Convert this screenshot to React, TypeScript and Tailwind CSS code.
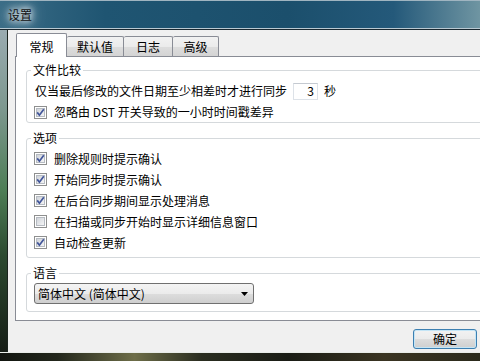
import React from 'react';

const TABS = ['常规', '默认值', '日志', '高级'];

const OPTIONS = [
  { label: '删除规则时提示确认', checked: true },
  { label: '开始同步时提示确认', checked: true },
  { label: '在后台同步期间显示处理消息', checked: true },
  { label: '在扫描或同步开始时显示详细信息窗口', checked: false },
  { label: '自动检查更新', checked: true },
];

function CheckBox({ checked }: { checked: boolean }) {
  return (
    <svg width="13" height="13" viewBox="0 0 13 13" className="shrink-0">
      <defs>
        <linearGradient id="cbfill" x1="0" y1="0" x2="1" y2="1">
          <stop offset="0" stopColor="#cdd1d7" />
          <stop offset="1" stopColor="#f7f7f8" />
        </linearGradient>
      </defs>
      <rect x="0.5" y="0.5" width="12" height="12" fill="#fff" stroke="#8e8f8f" />
      <rect x="2.5" y="2.5" width="8" height="8" fill="url(#cbfill)" stroke="#b6bbc2" />
      {checked && (
        <path d="M3.2 6.4 L5.4 9.2 L9.8 3.2" fill="none" stroke="#42569a" strokeWidth="1.7" />
      )}
    </svg>
  );
}

function Group({ title, children, bodyClass }: { title: string; children: React.ReactNode; bodyClass: string }) {
  return (
    <fieldset className="border border-[#d5d9dc] rounded-[3px] p-0 m-0">
      <legend className="ml-[4px] px-[2px] text-[12px] leading-[14px]">{title}</legend>
      <div className={bodyClass}>{children}</div>
    </fieldset>
  );
}

export default function App() {
  return (
    <div className="w-[480px] h-[361px] overflow-hidden flex flex-col bg-black text-black font-['Noto_Sans_CJK_SC','Microsoft_YaHei',sans-serif]">
      {/* title bar */}
      <div className="h-[30px] flex flex-col shrink-0">
        <div className="h-px bg-[#9fb4c0]" />
        <div className="flex-1 flex items-center pl-[8px] bg-[linear-gradient(90deg,#3a6c86_0%,#1f5572_22%,#1b4f6c_60%,#24597a_82%,#6f95a2_100%)]">
          <span className="text-[12px] leading-[14px] text-[#111] [text-shadow:0_0_6px_#fff,0_0_10px_#fff,0_0_16px_rgba(255,255,255,0.8)]">
            设置
          </span>
        </div>
        <div className="h-px bg-[#b9c9d2]" />
        <div className="h-px bg-[#1a2830]" />
      </div>

      <div className="flex flex-1 min-h-0">
        {/* left frame */}
        <div className="w-[8px] shrink-0 border-r border-[#1b241e] bg-[linear-gradient(180deg,#9aabb0_0%,#7c978e_25%,#4d7d55_50%,#2c4a30_70%,#161d16_100%)]" />

        {/* client */}
        <div className="flex-1 min-w-0 bg-[#f0f0f0] flex flex-col overflow-hidden text-[12px] leading-[14px]">
          {/* tabs */}
          <div className="h-[26px] flex items-end pl-[8px] shrink-0">
            {TABS.map((t, i) =>
              i === 0 ? (
                <div
                  key={t}
                  className="relative z-10 w-[51px] h-[24px] -mb-px bg-white border border-b-0 border-[#898c95] rounded-t-[2px] flex items-center justify-center pt-[2px]"
                >
                  {t}
                </div>
              ) : (
                <div
                  key={t}
                  className={`h-[20px] border-t border-r border-[#898c95] rounded-t-[2px] flex items-center justify-center pt-[1px] bg-[linear-gradient(180deg,#f2f2f2_0%,#ebebeb_50%,#dddddd_51%,#d4d4d4_100%)] ${
                    i === 1 ? 'w-[57px]' : i === 2 ? 'w-[49px]' : 'w-[46px]'
                  }`}
                >
                  {t}
                </div>
              )
            )}
          </div>

          {/* tab page */}
          <div className="ml-[7px] -mr-[20px] bg-white border border-[#898c95] pt-[6px] pl-[10px] pr-[10px] pb-[8px] flex flex-col gap-[8px] shrink-0">
            <Group title="文件比较" bodyClass="pl-[7px] pt-[5px] pb-[2px] flex flex-col gap-[4px]">
              <div className="h-[18px] flex items-center">
                <span className="ml-[1px]">仅当最后修改的文件日期至少相差时才进行同步</span>
                <div className="ml-[6px] w-[25px] h-[17px] border border-[#dde2e8] border-t-[#c5cad1] bg-white flex items-center justify-end pr-[3px]">
                  3
                </div>
                <span className="ml-[6px]">秒</span>
              </div>
              <div className="h-[16px] flex items-center gap-[7px]">
                <CheckBox checked />
                <span>忽略由 DST 开关导致的一小时时间戳差异</span>
              </div>
            </Group>

            <Group title="选项" bodyClass="pl-[7px] pt-[3px] pb-[4px] flex flex-col">
              {OPTIONS.map((o) => (
                <div key={o.label} className="h-[21px] flex items-center gap-[7px]">
                  <CheckBox checked={o.checked} />
                  <span>{o.label}</span>
                </div>
              ))}
            </Group>

            <Group title="语言" bodyClass="pl-[7px] pt-[3px] pb-[7px]">
              <div className="w-[220px] h-[21px] border border-[#707070] rounded-[3px] flex items-center justify-between pl-[3px] pr-[5px] bg-[linear-gradient(180deg,#f4f4f4_0%,#ebebeb_50%,#dddddd_51%,#cfcfcf_100%)]">
                <span>简体中文 (简体中文)</span>
                <svg width="7" height="4" viewBox="0 0 7 4">
                  <path d="M0 0 H7 L3.5 4 Z" fill="#000" />
                </svg>
              </div>
            </Group>
          </div>

          {/* buttons */}
          <div className="flex justify-end pt-[8px] pr-[3px]">
            <button className="w-[64px] h-[20px] border border-[#3c7fb1] rounded-[3px] shadow-[inset_0_0_0_1px_#c4e5f6] bg-[linear-gradient(180deg,#f2f2f2_0%,#ebebeb_50%,#dddddd_51%,#cfcfcf_100%)] text-[12px] leading-[14px]">
              确定
            </button>
          </div>
        </div>
      </div>

      {/* bottom frame */}
      <div className="h-[9px] shrink-0 border-t border-[#e8ece8] bg-[linear-gradient(90deg,#121510_0%,#23271c_12%,#6d6d48_28%,#2a2d20_42%,#1a1c15_60%,#3a3422_80%,#2b2a1c_100%)]" />
    </div>
  );
}
